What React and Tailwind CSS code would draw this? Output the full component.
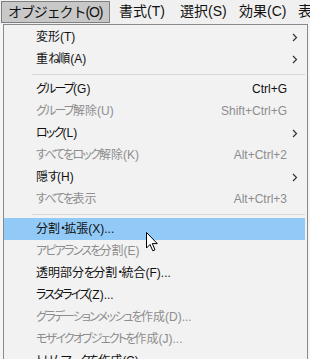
import React from "react";

const items = [
  { label: "変形(T)", arrow: true },
  { label: "重ね順(A)", arrow: true },
  "sep",
  { label: "グループ(G)", sc: "Ctrl+G" },
  { label: "グループ解除(U)", sc: "Shift+Ctrl+G", dis: true },
  { label: "ロック(L)", arrow: true },
  { label: "すべてをロック解除(K)", sc: "Alt+Ctrl+2", dis: true },
  { label: "隠す(H)", arrow: true },
  { label: "すべてを表示", sc: "Alt+Ctrl+3", dis: true },
  "sep",
  { label: "分割・拡張(X)...", hl: true },
  { label: "アピアランスを分割(E)", dis: true },
  { label: "透明部分を分割・統合(F)..." },
  { label: "ラスタライズ(Z)..." },
  { label: "グラデーションメッシュを作成(D)...", dis: true },
  { label: "モザイクオブジェクトを作成(J)...", dis: true },
  { label: "トリムマークを作成(C)" },
];

function Label({ text }) {
  const parts = text.split(/([\u3040-\u30ff]+)/).filter(Boolean);
  return (
    <>
      {parts.map((p, i) =>
        /[\u3040-\u30ff]/.test(p) ? (
          <span key={i} className="tracking-[-1.8px] [font-feature-settings:'palt']">
            {p}
          </span>
        ) : (
          <span key={i}>{p}</span>
        )
      )}
    </>
  );
}

function Chevron() {
  return (
    <svg width="6" height="9" viewBox="0 0 6 9">
      <path d="M1 1 L4.5 4.5 L1 8" fill="none" stroke="#333" strokeWidth="1.2" />
    </svg>
  );
}

export default function App() {
  const font = {
    fontFamily: '"Liberation Sans", "Noto Sans CJK JP", sans-serif',
  };
  return (
    <div
      className="relative w-[310px] h-[359px] overflow-hidden bg-[#f5f5f5]"
      style={font}
    >
      {/* menu bar */}
      <div className="flex items-start h-[24px] bg-[#f0f0f0] text-[14px] text-[#111] whitespace-nowrap">
        <div className="shrink-0 mt-px ml-px h-[22px] w-[109px] flex items-center pl-[6px] border border-[#7f7f7f] bg-[#c8c8c8] tracking-[-1.1px]">
          オブジェクト(O)
        </div>
        <div className="shrink-0 h-[23px] w-[61px] ml-[9px] flex items-center">書式(T)</div>
        <div className="shrink-0 h-[23px] w-[59px] flex items-center">選択(S)</div>
        <div className="shrink-0 h-[23px] w-[59px] flex items-center">効果(C)</div>
        <div className="shrink-0 h-[23px] flex items-center">表示(V)</div>
      </div>

      {/* dropdown */}
      <div className="ml-[3px] w-[305px] border border-[#8a8a8a] bg-[#f2f2f2] pt-px text-[12px]">
        {items.map((it, i) =>
          it === "sep" ? (
            <div key={i} className="h-[8px] flex items-center pl-[28px] pr-[2px]">
              <div className="h-px w-full bg-[#d7d7d7]" />
            </div>
          ) : (
            <div
              key={i}
              className={
                "h-[22px] flex items-center mr-[2px] " +
                (it.hl ? "bg-[#91c9f7] " : "") +
                (it.dis ? "text-[#8d8d8d]" : "text-[#111]")
              }
            >
              <div className="flex-1 pl-[32px] whitespace-nowrap">
                <Label text={it.label} />
              </div>
              <div className="whitespace-nowrap">{it.sc || ""}</div>
              <div className="w-[18px] flex justify-end pr-[7px]">
                {it.arrow ? <Chevron /> : null}
              </div>
            </div>
          )
        )}
      </div>

      {/* cursor */}
      <svg
        className="absolute left-[146px] top-[232px]"
        width="13"
        height="20"
        viewBox="0 0 13 20"
      >
        <path
          d="M0.5 0.5 L0.5 16 L4 12.5 L6.8 18.8 L9 17.8 L6.3 11.6 L11.3 11.6 Z"
          fill="#fff"
          stroke="#000"
          strokeWidth="1"
          strokeLinejoin="miter"
        />
      </svg>
    </div>
  );
}
